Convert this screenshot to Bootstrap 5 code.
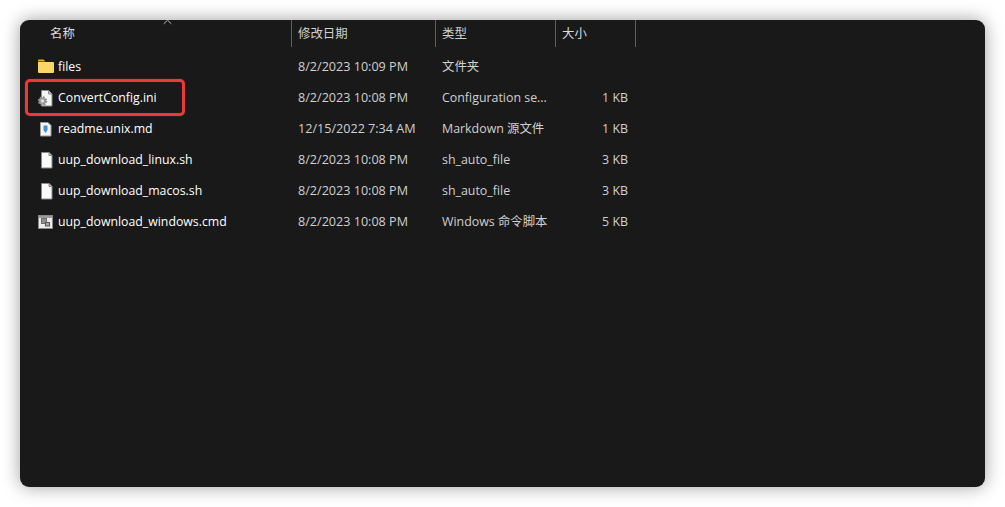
<!DOCTYPE html>
<html lang="zh">
<head>
<meta charset="utf-8">
<title>Explorer</title>
<link href="https://cdn.jsdelivr.net/npm/bootstrap@5.3.0/dist/css/bootstrap.min.css" rel="stylesheet">
<style>
html,body{height:100%;background:#fff;overflow:hidden}
.page-wrap{padding:20px;height:507px}
.explorer{position:relative;height:467px;background:#191919;border-radius:9px;box-shadow:0 0 18px rgba(0,0,0,.38);color:#fff;font-family:"Open Sans","Noto Sans CJK SC",sans-serif;font-size:12.3px;overflow:hidden}
.head-row{height:27px;color:#dcdcdc;margin-bottom:4px}
.head-row>div{border-right:1px solid #5f5f5f;padding-left:6px;padding-top:4px;line-height:20px}
.file-row{height:31px;line-height:31px;white-space:nowrap}
.c-name{width:272px;flex:none}
.head-row .c-name{padding-left:30px}
.c-date{width:144px;flex:none;padding-left:6px;color:#d0d0d0;font-size:12.6px}
.c-type{width:120px;flex:none;padding-left:6px;color:#d0d0d0;font-size:12.4px}
.c-size{width:80px;flex:none;padding-right:8px;text-align:right;color:#d0d0d0;font-size:12.4px}
.head-row .c-date,.head-row .c-type,.head-row .c-name,.head-row .c-size{font-size:12.4px}
.head-row .c-size{text-align:left;color:#dcdcdc}
.ic{width:20px;height:20px;flex:none;margin-left:16px;margin-right:2px}
.sort-mark{position:absolute;left:143px;top:-1px}
.annot{position:absolute;left:5px;top:59px;width:160px;height:37px;border:3px solid #e8393c;border-radius:5px;box-shadow:0 0 1px #e8393c}
</style>
</head>
<body>
<div class="page-wrap">
<div class="explorer">
  <svg class="sort-mark" width="9" height="6" viewBox="0 0 9 6"><path d="M.7 4.8 4.5 1.2l3.8 3.6" fill="none" stroke="#bdbdbd"/></svg>
  <div class="d-flex head-row">
    <div class="c-name">名称</div><div class="c-date">修改日期</div><div class="c-type">类型</div><div class="c-size">大小</div>
  </div>
  <div class="d-flex file-row">
    <div class="c-name d-flex align-items-center">
      <svg class="ic" viewBox="0 0 20 20"><path d="M2 3.5q0-1 1-1h4.500l2 2H2z" fill="#e8a820"/><path d="M2 5h15q1 0 1 1v9q0 1-1 1H3q-1 0-1-1z" fill="#fbd667"/></svg>
      <span>files</span>
    </div>
    <div class="c-date">8/2/2023 10:09 PM</div><div class="c-type">文件夹</div><div class="c-size"></div>
  </div>
  <div class="d-flex file-row">
    <div class="c-name d-flex align-items-center">
      <svg class="ic" viewBox="0 0 20 20"><path d="M5.500 2.500h7l3.500 3.500v12H5.500z" fill="#f4f4f4" stroke="#8a8a8a"/><path d="M12.500 2.500V6H16" fill="#ccc" stroke="#8a8a8a"/><circle cx="6.500" cy="13" r="3.700" fill="#a0a0a0" stroke="#8c8c8c" stroke-width="2" stroke-dasharray="1.600 1.300"/><circle cx="6.500" cy="13" r="1.400" fill="#eee"/></svg>
      <span>ConvertConfig.ini</span>
    </div>
    <div class="c-date">8/2/2023 10:08 PM</div><div class="c-type">Configuration se...</div><div class="c-size">1 KB</div>
  </div>
  <div class="d-flex file-row">
    <div class="c-name d-flex align-items-center">
      <svg class="ic" viewBox="0 0 20 20"><path d="M4.500 3.500h7.500l3 3v10.500H4.500z" fill="#f4f4f4" stroke="#9a9a9a"/><path d="M7.500 6.500h4v4.500L9.500 14 7.500 11z" fill="#3d8fd6"/></svg>
      <span>readme.unix.md</span>
    </div>
    <div class="c-date">12/15/2022 7:34 AM</div><div class="c-type">Markdown 源文件</div><div class="c-size">1 KB</div>
  </div>
  <div class="d-flex file-row">
    <div class="c-name d-flex align-items-center">
      <svg class="ic" viewBox="0 0 20 20"><path d="M5.500 2.500h7.500l3 3v12.500H5.500z" fill="#fafafa" stroke="#8a8a8a"/><path d="M13 2.500V5.500h3" fill="#bbb" stroke="#8a8a8a"/></svg>
      <span>uup_download_linux.sh</span>
    </div>
    <div class="c-date">8/2/2023 10:08 PM</div><div class="c-type">sh_auto_file</div><div class="c-size">3 KB</div>
  </div>
  <div class="d-flex file-row">
    <div class="c-name d-flex align-items-center">
      <svg class="ic" viewBox="0 0 20 20"><path d="M5.500 2.500h7.500l3 3v12.500H5.500z" fill="#fafafa" stroke="#8a8a8a"/><path d="M13 2.500V5.500h3" fill="#bbb" stroke="#8a8a8a"/></svg>
      <span>uup_download_macos.sh</span>
    </div>
    <div class="c-date">8/2/2023 10:08 PM</div><div class="c-type">sh_auto_file</div><div class="c-size">3 KB</div>
  </div>
  <div class="d-flex file-row">
    <div class="c-name d-flex align-items-center">
      <svg class="ic" viewBox="0 0 20 20"><rect x="2.500" y="3.500" width="14" height="13" fill="#ececec" stroke="#8a8a8a"/><rect x="3" y="4" width="13" height="2" fill="#9a9a9a"/><rect x="5.500" y="6.500" width="5" height="5" fill="#8d8d8d" stroke="#6d6d6d"/><rect x="9.500" y="10.500" width="4" height="3.500" fill="#a8a8a8" stroke="#555"/></svg>
      <span>uup_download_windows.cmd</span>
    </div>
    <div class="c-date">8/2/2023 10:08 PM</div><div class="c-type">Windows 命令脚本</div><div class="c-size">5 KB</div>
  </div>
  <div class="annot"></div>
</div>
</div>
<script src="https://cdn.jsdelivr.net/npm/bootstrap@5.3.0/dist/js/bootstrap.bundle.min.js"></script>
</body>
</html>
